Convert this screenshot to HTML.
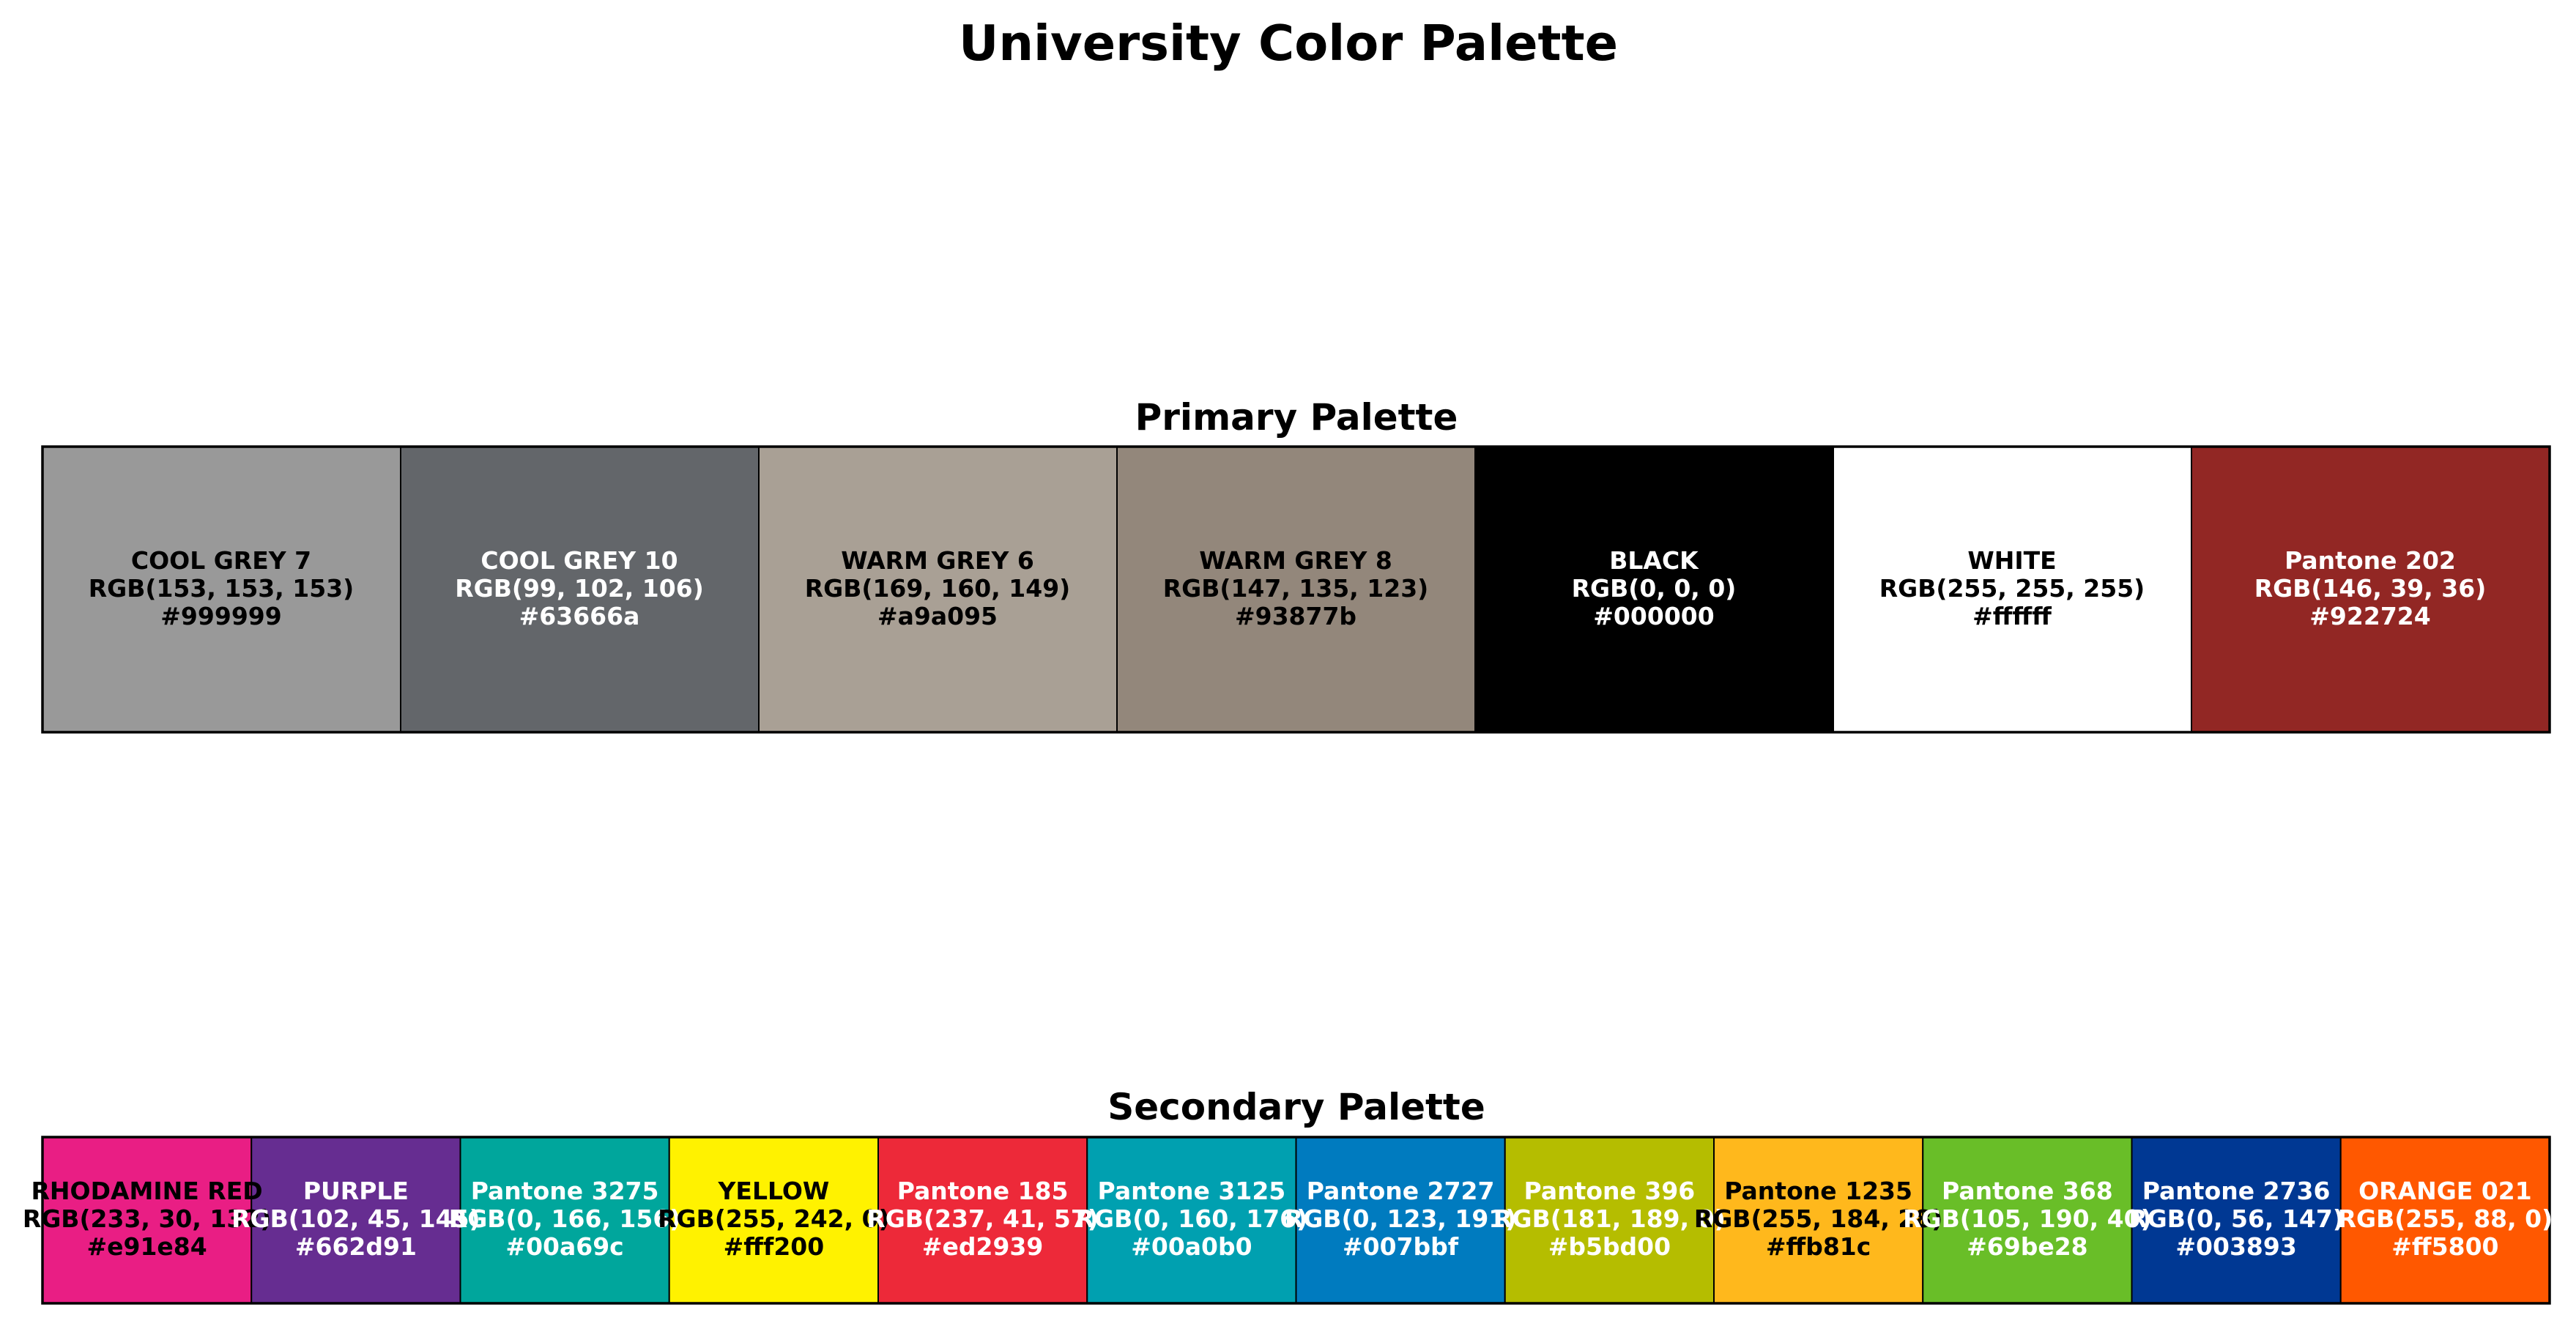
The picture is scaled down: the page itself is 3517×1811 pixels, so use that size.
<!DOCTYPE html>
<html><head><meta charset="utf-8"><style>
html,body{margin:0;padding:0;background:#fff;}
svg{display:block;}
text{font-family:"DejaVu Sans","Liberation Sans",sans-serif;font-weight:bold;}
</style></head><body>
<svg width="3517" height="1811" viewBox="0 0 3517 1811" xmlns="http://www.w3.org/2000/svg">
<text x="1759" y="82" font-size="67" text-anchor="middle" fill="#000">University Color Palette</text>
<text x="1770" y="587" font-size="50" text-anchor="middle" fill="#000">Primary Palette</text>
<text x="1770" y="1529" font-size="50" text-anchor="middle" fill="#000">Secondary Palette</text>
<g stroke="#000" stroke-width="2">
<rect x="58" y="610" width="489" height="390" fill="#999999"/>
<rect x="547" y="610" width="489" height="390" fill="#63666a"/>
<rect x="1036" y="610" width="489" height="390" fill="#a9a095"/>
<rect x="1525" y="610" width="489" height="390" fill="#93877b"/>
<rect x="2014" y="610" width="489" height="390" fill="#000000"/>
<rect x="2503" y="610" width="489" height="390" fill="#ffffff"/>
<rect x="2992" y="610" width="489" height="390" fill="#922724"/>
</g>
<rect x="58" y="610" width="3423" height="390" fill="none" stroke="#000" stroke-width="3.5"/>
<g font-size="33" text-anchor="middle">
<g fill="#000"><text x="302" y="777">COOL GREY 7</text><text x="302" y="815">RGB(153, 153, 153)</text><text x="302" y="853">#999999</text></g>
<g fill="#fff"><text x="791" y="777">COOL GREY 10</text><text x="791" y="815">RGB(99, 102, 106)</text><text x="791" y="853">#63666a</text></g>
<g fill="#000"><text x="1280" y="777">WARM GREY 6</text><text x="1280" y="815">RGB(169, 160, 149)</text><text x="1280" y="853">#a9a095</text></g>
<g fill="#000"><text x="1769" y="777">WARM GREY 8</text><text x="1769" y="815">RGB(147, 135, 123)</text><text x="1769" y="853">#93877b</text></g>
<g fill="#fff"><text x="2258" y="777">BLACK</text><text x="2258" y="815">RGB(0, 0, 0)</text><text x="2258" y="853">#000000</text></g>
<g fill="#000"><text x="2747" y="777">WHITE</text><text x="2747" y="815">RGB(255, 255, 255)</text><text x="2747" y="853">#ffffff</text></g>
<g fill="#fff"><text x="3236" y="777">Pantone 202</text><text x="3236" y="815">RGB(146, 39, 36)</text><text x="3236" y="853">#922724</text></g>
</g>
<g stroke="#000" stroke-width="2">
<rect x="58" y="1553" width="285.25" height="227" fill="#e91e84"/>
<rect x="343.25" y="1553" width="285.25" height="227" fill="#662d91"/>
<rect x="628.5" y="1553" width="285.25" height="227" fill="#00a69c"/>
<rect x="913.75" y="1553" width="285.25" height="227" fill="#fff200"/>
<rect x="1199" y="1553" width="285.25" height="227" fill="#ed2939"/>
<rect x="1484.25" y="1553" width="285.25" height="227" fill="#00a0b0"/>
<rect x="1769.5" y="1553" width="285.25" height="227" fill="#007bbf"/>
<rect x="2054.75" y="1553" width="285.25" height="227" fill="#b5bd00"/>
<rect x="2340" y="1553" width="285.25" height="227" fill="#ffb81c"/>
<rect x="2625.25" y="1553" width="285.25" height="227" fill="#69be28"/>
<rect x="2910.5" y="1553" width="285.25" height="227" fill="#003893"/>
<rect x="3195.75" y="1553" width="285.25" height="227" fill="#ff5800"/>
</g>
<rect x="58" y="1553" width="3423" height="227" fill="none" stroke="#000" stroke-width="3.5"/>
<g font-size="33" text-anchor="middle">
<g fill="#000"><text x="200.6" y="1638">RHODAMINE RED</text><text x="200.6" y="1676">RGB(233, 30, 132)</text><text x="200.6" y="1714">#e91e84</text></g>
<g fill="#fff"><text x="485.9" y="1638">PURPLE</text><text x="485.9" y="1676">RGB(102, 45, 145)</text><text x="485.9" y="1714">#662d91</text></g>
<g fill="#fff"><text x="771.1" y="1638">Pantone 3275</text><text x="771.1" y="1676">RGB(0, 166, 156)</text><text x="771.1" y="1714">#00a69c</text></g>
<g fill="#000"><text x="1056.4" y="1638">YELLOW</text><text x="1056.4" y="1676">RGB(255, 242, 0)</text><text x="1056.4" y="1714">#fff200</text></g>
<g fill="#fff"><text x="1341.6" y="1638">Pantone 185</text><text x="1341.6" y="1676">RGB(237, 41, 57)</text><text x="1341.6" y="1714">#ed2939</text></g>
<g fill="#fff"><text x="1626.9" y="1638">Pantone 3125</text><text x="1626.9" y="1676">RGB(0, 160, 176)</text><text x="1626.9" y="1714">#00a0b0</text></g>
<g fill="#fff"><text x="1912.1" y="1638">Pantone 2727</text><text x="1912.1" y="1676">RGB(0, 123, 191)</text><text x="1912.1" y="1714">#007bbf</text></g>
<g fill="#fff"><text x="2197.4" y="1638">Pantone 396</text><text x="2197.4" y="1676">RGB(181, 189, 0)</text><text x="2197.4" y="1714">#b5bd00</text></g>
<g fill="#000"><text x="2482.6" y="1638">Pantone 1235</text><text x="2482.6" y="1676">RGB(255, 184, 28)</text><text x="2482.6" y="1714">#ffb81c</text></g>
<g fill="#fff"><text x="2767.9" y="1638">Pantone 368</text><text x="2767.9" y="1676">RGB(105, 190, 40)</text><text x="2767.9" y="1714">#69be28</text></g>
<g fill="#fff"><text x="3053.1" y="1638">Pantone 2736</text><text x="3053.1" y="1676">RGB(0, 56, 147)</text><text x="3053.1" y="1714">#003893</text></g>
<g fill="#fff"><text x="3338.4" y="1638">ORANGE 021</text><text x="3338.4" y="1676">RGB(255, 88, 0)</text><text x="3338.4" y="1714">#ff5800</text></g>
</g>
</svg>
</body></html>
